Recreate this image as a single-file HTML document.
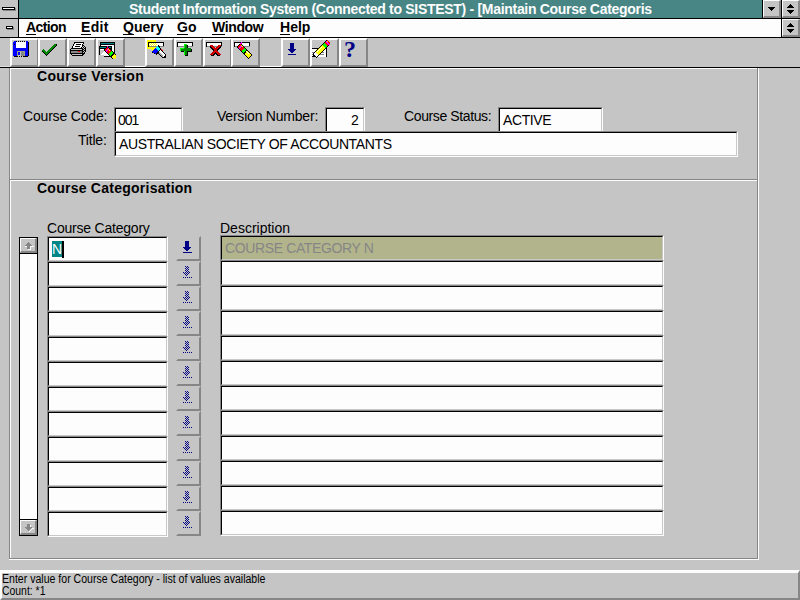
<!DOCTYPE html>
<html><head><meta charset="utf-8"><title>Student Information System</title>
<style>
*{margin:0;padding:0;box-sizing:border-box}
html,body{width:800px;height:600px;overflow:hidden;background:#c5c5c5}
body{position:relative;font-family:"Liberation Sans",sans-serif;font-size:13px;color:#000;line-height:1}
.a{position:absolute}
.t{position:absolute;white-space:nowrap;line-height:16px;height:16px}
.b{font-weight:bold}
.fld{position:absolute;background:#fdfdfd;border-top:1px solid #868686;border-left:1px solid #868686;border-right:1px solid #fdfdfd;border-bottom:1px solid #fdfdfd}
.fld i{position:absolute;left:0;top:0;right:0;bottom:0;border-top:1px solid #000;border-left:1px solid #000;border-right:1px solid #c8c8c8;border-bottom:1px solid #c8c8c8}
.tb{position:absolute;top:38px;width:29px;height:29px;background:#c5c5c5;border-left:2px solid #fdfdfd;border-top:2px solid #fdfdfd;border-right:2px solid #868686;border-bottom:2px solid #868686}
.tb svg{position:absolute;left:0;top:0}
.lov{position:absolute;left:176px;width:25px;height:25px;border:2px solid transparent;border-right-color:#868686;border-bottom-color:#868686}
svg{shape-rendering:crispEdges;display:block;overflow:visible}
u{text-decoration:none;border-bottom:1px solid #000;display:inline-block;line-height:12px;height:14px}
</style></head><body>

<div class="a" style="left:0;top:0;width:800px;height:19px;background:#000"></div>
<div class="a" style="left:0;top:0;width:18px;height:18px;background:#c5c5c5"></div>
<div class="a" style="left:3px;top:8px;width:13px;height:3px;background:#868686"></div>
<div class="a" style="left:2px;top:7px;width:13px;height:3px;background:#fdfdfd;border:1px solid #000"></div>
<div class="a" style="left:19px;top:0;width:743px;height:18px;background:#488686"></div>
<div class="t b" id="title" style="left:129px;top:1px;font-size:14px;letter-spacing:-0.299px;color:#fdfdfd;">Student Information System (Connected to SISTEST) - [Maintain Course Categoris</div>
<div class="a" style="left:763px;top:0px;width:18px;height:18px;background:#c5c5c5;border-left:1px solid #fdfdfd;border-top:1px solid #fdfdfd;border-right:2px solid #868686;border-bottom:2px solid #868686"></div><svg class="a" style="left:763px;top:0px" width="18" height="18" viewBox="0 0 18 18"><rect x="5" y="7" width="7" height="1" fill="#000"/><rect x="6" y="8" width="5" height="1" fill="#000"/><rect x="7" y="9" width="3" height="1" fill="#000"/><rect x="8" y="10" width="1" height="1" fill="#000"/></svg>
<div class="a" style="left:782px;top:0px;width:18px;height:18px;background:#c5c5c5;border-left:1px solid #fdfdfd;border-top:1px solid #fdfdfd;border-right:2px solid #868686;border-bottom:2px solid #868686"></div><svg class="a" style="left:782px;top:0px" width="18" height="18" viewBox="0 0 18 18"><rect x="8" y="4" width="1" height="1" fill="#000"/><rect x="7" y="5" width="3" height="1" fill="#000"/><rect x="6" y="6" width="5" height="1" fill="#000"/><rect x="5" y="7" width="7" height="1" fill="#000"/><rect x="5" y="10" width="7" height="1" fill="#000"/><rect x="6" y="11" width="5" height="1" fill="#000"/><rect x="7" y="12" width="3" height="1" fill="#000"/><rect x="8" y="13" width="1" height="1" fill="#000"/></svg>
<div class="a" style="left:0;top:19px;width:800px;height:19px;background:#000"></div>
<div class="a" style="left:0;top:19px;width:18px;height:18px;background:#c5c5c5"></div>
<div class="a" style="left:7px;top:27px;width:7px;height:3px;background:#868686"></div>
<div class="a" style="left:6px;top:26px;width:7px;height:3px;background:#fdfdfd;border:1px solid #000"></div>
<div class="a" style="left:19px;top:19px;width:762px;height:18px;background:#fdfdfd"></div>
<div class="a" style="left:782px;top:19px;width:18px;height:18px;background:#c5c5c5;border-left:1px solid #fdfdfd;border-top:1px solid #fdfdfd;border-right:2px solid #868686;border-bottom:2px solid #868686"></div><svg class="a" style="left:782px;top:19px" width="18" height="18" viewBox="0 0 18 18"><rect x="8" y="4" width="1" height="1" fill="#000"/><rect x="7" y="5" width="3" height="1" fill="#000"/><rect x="6" y="6" width="5" height="1" fill="#000"/><rect x="5" y="7" width="7" height="1" fill="#000"/><rect x="5" y="10" width="7" height="1" fill="#000"/><rect x="6" y="11" width="5" height="1" fill="#000"/><rect x="7" y="12" width="3" height="1" fill="#000"/><rect x="8" y="13" width="1" height="1" fill="#000"/></svg>
<div class="t b" id="mA" style="left:26px;top:19px;font-size:14px;letter-spacing:-0.600px;color:#000;"><u>A</u>ction</div>
<div class="t b" id="mE" style="left:81px;top:19px;font-size:14px;letter-spacing:0.333px;color:#000;"><u>E</u>dit</div>
<div class="t b" id="mQ" style="left:123px;top:19px;font-size:14px;letter-spacing:0.000px;color:#000;"><u>Q</u>uery</div>
<div class="t b" id="mG" style="left:177px;top:19px;font-size:14px;letter-spacing:0.000px;color:#000;"><u>G</u>o</div>
<div class="t b" id="mW" style="left:212px;top:19px;font-size:14px;letter-spacing:-0.400px;color:#000;"><u>W</u>indow</div>
<div class="t b" id="mH" style="left:280px;top:19px;font-size:14px;letter-spacing:0.000px;color:#000;"><u>H</u>elp</div>
<div class="a" style="left:0;top:38px;width:800px;height:29px;background:#c5c5c5"></div>
<div class="a" style="left:0;top:67px;width:800px;height:1px;background:#000"></div>
<div class="tb" style="left:10px"></div><svg class="a" style="left:10px;top:38px" width="29" height="29" viewBox="10 38 29 29"><rect x="14" y="41" width="2" height="1" fill="#0000ff"/><rect x="16" y="41" width="1" height="1" fill="#000"/><rect x="17" y="41" width="1" height="1" fill="#c5c5c5"/><rect x="18" y="41" width="1" height="1" fill="#000"/><rect x="19" y="41" width="1" height="1" fill="#c5c5c5"/><rect x="20" y="41" width="1" height="1" fill="#000"/><rect x="21" y="41" width="1" height="1" fill="#c5c5c5"/><rect x="22" y="41" width="1" height="1" fill="#000"/><rect x="23" y="41" width="1" height="1" fill="#c5c5c5"/><rect x="24" y="41" width="1" height="1" fill="#000"/><rect x="25" y="41" width="1" height="1" fill="#c5c5c5"/><rect x="26" y="41" width="2" height="1" fill="#0000ff"/><rect x="13" y="42" width="3" height="1" fill="#0000ff"/><rect x="16" y="42" width="10" height="1" fill="#fdfdfd"/><rect x="26" y="42" width="2" height="1" fill="#0000ff"/><rect x="28" y="42" width="1" height="1" fill="#000"/><rect x="13" y="43" width="3" height="1" fill="#0000ff"/><rect x="16" y="43" width="10" height="1" fill="#fdfdfd"/><rect x="26" y="43" width="2" height="1" fill="#0000ff"/><rect x="28" y="43" width="1" height="1" fill="#000"/><rect x="13" y="44" width="1" height="1" fill="#0000ff"/><rect x="14" y="44" width="1" height="1" fill="#000"/><rect x="15" y="44" width="1" height="1" fill="#0000ff"/><rect x="16" y="44" width="10" height="1" fill="#fdfdfd"/><rect x="26" y="44" width="2" height="1" fill="#0000ff"/><rect x="28" y="44" width="1" height="1" fill="#000"/><rect x="13" y="45" width="3" height="1" fill="#0000ff"/><rect x="16" y="45" width="10" height="1" fill="#fdfdfd"/><rect x="26" y="45" width="2" height="1" fill="#0000ff"/><rect x="28" y="45" width="1" height="1" fill="#000"/><rect x="13" y="46" width="3" height="1" fill="#0000ff"/><rect x="16" y="46" width="10" height="1" fill="#fdfdfd"/><rect x="26" y="46" width="2" height="1" fill="#0000ff"/><rect x="28" y="46" width="1" height="1" fill="#000"/><rect x="13" y="47" width="3" height="1" fill="#0000ff"/><rect x="16" y="47" width="10" height="1" fill="#fdfdfd"/><rect x="26" y="47" width="2" height="1" fill="#0000ff"/><rect x="28" y="47" width="1" height="1" fill="#000"/><rect x="13" y="48" width="15" height="1" fill="#0000ff"/><rect x="28" y="48" width="1" height="1" fill="#000"/><rect x="13" y="49" width="15" height="1" fill="#0000ff"/><rect x="28" y="49" width="1" height="1" fill="#000"/><rect x="13" y="50" width="15" height="1" fill="#0000ff"/><rect x="28" y="50" width="1" height="1" fill="#000"/><rect x="13" y="51" width="4" height="1" fill="#0000ff"/><rect x="17" y="51" width="8" height="1" fill="#a0a086"/><rect x="25" y="51" width="3" height="1" fill="#0000ff"/><rect x="28" y="51" width="1" height="1" fill="#000"/><rect x="13" y="52" width="4" height="1" fill="#0000ff"/><rect x="17" y="52" width="1" height="1" fill="#a0a086"/><rect x="18" y="52" width="2" height="1" fill="#0000ff"/><rect x="20" y="52" width="1" height="1" fill="#c5c5c5"/><rect x="21" y="52" width="3" height="1" fill="#868686"/><rect x="24" y="52" width="1" height="1" fill="#a0a086"/><rect x="25" y="52" width="3" height="1" fill="#0000ff"/><rect x="28" y="52" width="1" height="1" fill="#000"/><rect x="13" y="53" width="4" height="1" fill="#0000ff"/><rect x="17" y="53" width="1" height="1" fill="#a0a086"/><rect x="18" y="53" width="2" height="1" fill="#0000ff"/><rect x="20" y="53" width="1" height="1" fill="#c5c5c5"/><rect x="21" y="53" width="3" height="1" fill="#868686"/><rect x="24" y="53" width="1" height="1" fill="#a0a086"/><rect x="25" y="53" width="3" height="1" fill="#0000ff"/><rect x="28" y="53" width="1" height="1" fill="#000"/><rect x="13" y="54" width="4" height="1" fill="#0000ff"/><rect x="17" y="54" width="1" height="1" fill="#a0a086"/><rect x="18" y="54" width="2" height="1" fill="#0000ff"/><rect x="20" y="54" width="1" height="1" fill="#c5c5c5"/><rect x="21" y="54" width="3" height="1" fill="#868686"/><rect x="24" y="54" width="1" height="1" fill="#a0a086"/><rect x="25" y="54" width="3" height="1" fill="#0000ff"/><rect x="28" y="54" width="1" height="1" fill="#000"/><rect x="13" y="55" width="4" height="1" fill="#0000ff"/><rect x="17" y="55" width="1" height="1" fill="#a0a086"/><rect x="18" y="55" width="3" height="1" fill="#c5c5c5"/><rect x="21" y="55" width="3" height="1" fill="#868686"/><rect x="24" y="55" width="1" height="1" fill="#a0a086"/><rect x="25" y="55" width="3" height="1" fill="#0000ff"/><rect x="28" y="55" width="1" height="1" fill="#000"/><rect x="14" y="56" width="4" height="1" fill="#000"/><rect x="18" y="56" width="1" height="1" fill="#c5c5c5"/><rect x="19" y="56" width="1" height="1" fill="#000"/><rect x="20" y="56" width="1" height="1" fill="#c5c5c5"/><rect x="21" y="56" width="1" height="1" fill="#000"/><rect x="22" y="56" width="1" height="1" fill="#c5c5c5"/><rect x="23" y="56" width="5" height="1" fill="#000"/></svg>
<div class="tb" style="left:38px"></div><svg class="a" style="left:38px;top:38px" width="29" height="29" viewBox="38 38 29 29"><rect x="54" y="44" width="2" height="1" fill="#008600"/><rect x="53" y="45" width="3" height="1" fill="#008600"/><rect x="52" y="46" width="3" height="1" fill="#008600"/><rect x="51" y="47" width="3" height="1" fill="#008600"/><rect x="50" y="48" width="3" height="1" fill="#008600"/><rect x="49" y="49" width="3" height="1" fill="#008600"/><rect x="48" y="50" width="3" height="1" fill="#008600"/><rect x="47" y="51" width="3" height="1" fill="#008600"/><rect x="44" y="52" width="5" height="1" fill="#008600"/><rect x="45" y="53" width="3" height="1" fill="#008600"/><rect x="46" y="54" width="1" height="1" fill="#008600"/><rect x="43" y="49" width="1" height="1" fill="#008600"/><rect x="42" y="50" width="3" height="1" fill="#008600"/><rect x="43" y="51" width="3" height="1" fill="#008600"/><rect x="56" y="44" width="1" height="1" fill="#000"/><rect x="56" y="45" width="1" height="1" fill="#000"/><rect x="55" y="46" width="1" height="1" fill="#000"/><rect x="54" y="47" width="1" height="1" fill="#000"/><rect x="53" y="48" width="1" height="1" fill="#000"/><rect x="52" y="49" width="1" height="1" fill="#000"/><rect x="51" y="50" width="1" height="1" fill="#000"/><rect x="50" y="51" width="1" height="1" fill="#000"/><rect x="49" y="52" width="1" height="1" fill="#000"/><rect x="48" y="53" width="1" height="1" fill="#000"/><rect x="47" y="54" width="1" height="1" fill="#000"/><rect x="46" y="55" width="1" height="1" fill="#000"/><rect x="42" y="51" width="1" height="1" fill="#000"/><rect x="43" y="52" width="1" height="1" fill="#000"/><rect x="44" y="53" width="1" height="1" fill="#000"/><rect x="45" y="54" width="1" height="1" fill="#000"/></svg>
<div class="tb" style="left:67px"></div><svg class="a" style="left:67px;top:38px" width="29" height="29" viewBox="67 38 29 29"><rect x="74" y="42" width="10" height="1" fill="#000"/><rect x="74" y="43" width="1" height="1" fill="#000"/><rect x="75" y="43" width="8" height="1" fill="#fdfdfd"/><rect x="83" y="43" width="1" height="1" fill="#000"/><rect x="73" y="44" width="1" height="1" fill="#000"/><rect x="74" y="44" width="2" height="1" fill="#fdfdfd"/><rect x="76" y="44" width="5" height="1" fill="#000"/><rect x="81" y="44" width="1" height="1" fill="#fdfdfd"/><rect x="82" y="44" width="1" height="1" fill="#000"/><rect x="73" y="45" width="1" height="1" fill="#000"/><rect x="74" y="45" width="8" height="1" fill="#fdfdfd"/><rect x="82" y="45" width="2" height="1" fill="#000"/><rect x="72" y="46" width="1" height="1" fill="#000"/><rect x="73" y="46" width="2" height="1" fill="#fdfdfd"/><rect x="75" y="46" width="5" height="1" fill="#000"/><rect x="80" y="46" width="2" height="1" fill="#fdfdfd"/><rect x="82" y="46" width="1" height="1" fill="#000"/><rect x="83" y="46" width="1" height="1" fill="#c5c5c5"/><rect x="84" y="46" width="1" height="1" fill="#000"/><rect x="72" y="47" width="1" height="1" fill="#000"/><rect x="73" y="47" width="8" height="1" fill="#fdfdfd"/><rect x="81" y="47" width="1" height="1" fill="#000"/><rect x="82" y="47" width="1" height="1" fill="#c5c5c5"/><rect x="83" y="47" width="1" height="1" fill="#000"/><rect x="84" y="47" width="1" height="1" fill="#c5c5c5"/><rect x="85" y="47" width="1" height="1" fill="#000"/><rect x="71" y="48" width="12" height="1" fill="#000"/><rect x="83" y="48" width="1" height="1" fill="#c5c5c5"/><rect x="84" y="48" width="2" height="1" fill="#000"/><rect x="70" y="49" width="1" height="1" fill="#000"/><rect x="71" y="49" width="11" height="1" fill="#c5c5c5"/><rect x="82" y="49" width="2" height="1" fill="#000"/><rect x="84" y="49" width="1" height="1" fill="#c5c5c5"/><rect x="85" y="49" width="1" height="1" fill="#000"/><rect x="70" y="50" width="13" height="1" fill="#000"/><rect x="83" y="50" width="1" height="1" fill="#c5c5c5"/><rect x="84" y="50" width="2" height="1" fill="#000"/><rect x="70" y="51" width="1" height="1" fill="#000"/><rect x="71" y="51" width="7" height="1" fill="#868686"/><rect x="78" y="51" width="2" height="1" fill="#ff0000"/><rect x="80" y="51" width="2" height="1" fill="#868686"/><rect x="82" y="51" width="2" height="1" fill="#000"/><rect x="84" y="51" width="1" height="1" fill="#c5c5c5"/><rect x="85" y="51" width="1" height="1" fill="#000"/><rect x="70" y="52" width="1" height="1" fill="#000"/><rect x="71" y="52" width="11" height="1" fill="#868686"/><rect x="82" y="52" width="1" height="1" fill="#000"/><rect x="83" y="52" width="1" height="1" fill="#c5c5c5"/><rect x="84" y="52" width="1" height="1" fill="#000"/><rect x="70" y="53" width="15" height="1" fill="#000"/><rect x="71" y="54" width="1" height="1" fill="#000"/><rect x="72" y="54" width="10" height="1" fill="#c5c5c5"/><rect x="82" y="54" width="2" height="1" fill="#000"/><rect x="72" y="55" width="11" height="1" fill="#000"/></svg>
<div class="tb" style="left:96px"></div><svg class="a" style="left:96px;top:38px" width="29" height="29" viewBox="96 38 29 29"><rect x="100" y="42" width="15" height="11" fill="#000"/><rect x="101" y="43" width="13" height="1" fill="#008686"/><rect x="101" y="45" width="13" height="8" fill="#fdfdfd"/><rect x="99" y="46" width="13" height="11" fill="#000"/><rect x="100" y="47" width="11" height="1" fill="#008686"/><rect x="100" y="49" width="11" height="7" fill="#fdfdfd"/><polygon points="100,50 105,50 100,56" fill="#c5c5c5"/><rect x="99" y="55" width="5" height="3" fill="#c5c5c5"/><rect x="104" y="49" width="1" height="1" fill="#000"/><rect x="104" y="50" width="1" height="1" fill="#000"/><rect x="105" y="48" width="1" height="1" fill="#000"/><rect x="105" y="49" width="1" height="1" fill="#000"/><rect x="106" y="47" width="1" height="1" fill="#000"/><rect x="106" y="48" width="1" height="1" fill="#000"/><rect x="107" y="46" width="1" height="1" fill="#000"/><rect x="107" y="47" width="1" height="1" fill="#000"/><rect x="105" y="50" width="1" height="1" fill="#000"/><rect x="105" y="51" width="1" height="1" fill="#000"/><rect x="106" y="49" width="1" height="1" fill="#000"/><rect x="106" y="50" width="1" height="1" fill="#000"/><rect x="107" y="48" width="1" height="1" fill="#000"/><rect x="107" y="49" width="1" height="1" fill="#000"/><rect x="108" y="47" width="1" height="1" fill="#000"/><rect x="108" y="48" width="1" height="1" fill="#000"/><rect x="106" y="51" width="1" height="1" fill="#000"/><rect x="106" y="52" width="1" height="1" fill="#000"/><rect x="107" y="50" width="1" height="1" fill="#000"/><rect x="107" y="51" width="1" height="1" fill="#000"/><rect x="108" y="49" width="1" height="1" fill="#000"/><rect x="108" y="50" width="1" height="1" fill="#000"/><rect x="109" y="48" width="1" height="1" fill="#000"/><rect x="109" y="49" width="1" height="1" fill="#000"/><rect x="107" y="52" width="1" height="1" fill="#000"/><rect x="107" y="53" width="1" height="1" fill="#000"/><rect x="108" y="51" width="1" height="1" fill="#000"/><rect x="108" y="52" width="1" height="1" fill="#000"/><rect x="109" y="50" width="1" height="1" fill="#000"/><rect x="109" y="51" width="1" height="1" fill="#000"/><rect x="110" y="49" width="1" height="1" fill="#000"/><rect x="110" y="50" width="1" height="1" fill="#000"/><rect x="108" y="53" width="1" height="1" fill="#000"/><rect x="108" y="54" width="1" height="1" fill="#000"/><rect x="109" y="52" width="1" height="1" fill="#000"/><rect x="109" y="53" width="1" height="1" fill="#000"/><rect x="110" y="51" width="1" height="1" fill="#000"/><rect x="110" y="52" width="1" height="1" fill="#000"/><rect x="111" y="50" width="1" height="1" fill="#000"/><rect x="111" y="51" width="1" height="1" fill="#000"/><rect x="109" y="54" width="1" height="1" fill="#000"/><rect x="109" y="55" width="1" height="1" fill="#000"/><rect x="110" y="53" width="1" height="1" fill="#000"/><rect x="110" y="54" width="1" height="1" fill="#000"/><rect x="111" y="52" width="1" height="1" fill="#000"/><rect x="111" y="53" width="1" height="1" fill="#000"/><rect x="112" y="51" width="1" height="1" fill="#000"/><rect x="112" y="52" width="1" height="1" fill="#000"/><rect x="110" y="55" width="1" height="1" fill="#000"/><rect x="110" y="56" width="1" height="1" fill="#000"/><rect x="111" y="54" width="1" height="1" fill="#000"/><rect x="111" y="55" width="1" height="1" fill="#000"/><rect x="112" y="53" width="1" height="1" fill="#000"/><rect x="112" y="54" width="1" height="1" fill="#000"/><rect x="113" y="52" width="1" height="1" fill="#000"/><rect x="113" y="53" width="1" height="1" fill="#000"/><rect x="111" y="56" width="1" height="1" fill="#000"/><rect x="111" y="57" width="1" height="1" fill="#000"/><rect x="112" y="55" width="1" height="1" fill="#000"/><rect x="112" y="56" width="1" height="1" fill="#000"/><rect x="113" y="54" width="1" height="1" fill="#000"/><rect x="113" y="55" width="1" height="1" fill="#000"/><rect x="114" y="53" width="1" height="1" fill="#000"/><rect x="114" y="54" width="1" height="1" fill="#000"/><rect x="112" y="57" width="1" height="1" fill="#000"/><rect x="112" y="58" width="1" height="1" fill="#000"/><rect x="113" y="56" width="1" height="1" fill="#000"/><rect x="113" y="57" width="1" height="1" fill="#000"/><rect x="114" y="55" width="1" height="1" fill="#000"/><rect x="114" y="56" width="1" height="1" fill="#000"/><rect x="115" y="54" width="1" height="1" fill="#000"/><rect x="115" y="55" width="1" height="1" fill="#000"/><rect x="105" y="49" width="1" height="1" fill="#ff0000"/><rect x="105" y="50" width="1" height="1" fill="#ff0000"/><rect x="106" y="48" width="1" height="1" fill="#ff0000"/><rect x="106" y="49" width="1" height="1" fill="#ff0000"/><rect x="107" y="47" width="1" height="1" fill="#ff0000"/><rect x="107" y="48" width="1" height="1" fill="#ff0000"/><rect x="106" y="50" width="1" height="1" fill="#ff00ff"/><rect x="106" y="51" width="1" height="1" fill="#ff00ff"/><rect x="107" y="49" width="1" height="1" fill="#ff00ff"/><rect x="107" y="50" width="1" height="1" fill="#ff00ff"/><rect x="108" y="48" width="1" height="1" fill="#ff00ff"/><rect x="108" y="49" width="1" height="1" fill="#ff00ff"/><rect x="107" y="51" width="1" height="1" fill="#ff0000"/><rect x="107" y="52" width="1" height="1" fill="#ff0000"/><rect x="108" y="50" width="1" height="1" fill="#ff0000"/><rect x="108" y="51" width="1" height="1" fill="#ff0000"/><rect x="109" y="49" width="1" height="1" fill="#ff0000"/><rect x="109" y="50" width="1" height="1" fill="#ff0000"/><rect x="108" y="52" width="1" height="1" fill="#ff0000"/><rect x="108" y="53" width="1" height="1" fill="#ff0000"/><rect x="109" y="51" width="1" height="1" fill="#ff0000"/><rect x="109" y="52" width="1" height="1" fill="#ff0000"/><rect x="110" y="50" width="1" height="1" fill="#ff0000"/><rect x="110" y="51" width="1" height="1" fill="#ff0000"/><rect x="109" y="53" width="1" height="1" fill="#00ff00"/><rect x="109" y="54" width="1" height="1" fill="#00ff00"/><rect x="110" y="52" width="1" height="1" fill="#00ff00"/><rect x="110" y="53" width="1" height="1" fill="#00ff00"/><rect x="111" y="51" width="1" height="1" fill="#00ff00"/><rect x="111" y="52" width="1" height="1" fill="#00ff00"/><rect x="110" y="54" width="1" height="1" fill="#00ff00"/><rect x="110" y="55" width="1" height="1" fill="#00ff00"/><rect x="111" y="53" width="1" height="1" fill="#00ff00"/><rect x="111" y="54" width="1" height="1" fill="#00ff00"/><rect x="112" y="52" width="1" height="1" fill="#00ff00"/><rect x="112" y="53" width="1" height="1" fill="#00ff00"/><rect x="111" y="55" width="1" height="1" fill="#000"/><rect x="111" y="56" width="1" height="1" fill="#000"/><rect x="112" y="54" width="1" height="1" fill="#000"/><rect x="112" y="55" width="1" height="1" fill="#000"/><rect x="113" y="53" width="1" height="1" fill="#000"/><rect x="113" y="54" width="1" height="1" fill="#000"/><rect x="112" y="56" width="1" height="1" fill="#ffff00"/><rect x="112" y="57" width="1" height="1" fill="#ffff00"/><rect x="113" y="55" width="1" height="1" fill="#ffff00"/><rect x="113" y="56" width="1" height="1" fill="#ffff00"/><rect x="114" y="54" width="1" height="1" fill="#ffff00"/><rect x="114" y="55" width="1" height="1" fill="#ffff00"/><rect x="113" y="57" width="1" height="1" fill="#ffff00"/><rect x="113" y="58" width="1" height="1" fill="#ffff00"/><rect x="114" y="56" width="1" height="1" fill="#ffff00"/><rect x="114" y="57" width="1" height="1" fill="#ffff00"/><rect x="115" y="55" width="1" height="1" fill="#ffff00"/><rect x="115" y="56" width="1" height="1" fill="#ffff00"/><rect x="114" y="57" width="2" height="1" fill="#ffff00"/><rect x="115" y="58" width="1" height="1" fill="#ffff00"/><rect x="107" y="46" width="1" height="1" fill="#ff00ff"/><rect x="108" y="49" width="1" height="1" fill="#ffff00"/><rect x="109" y="50" width="1" height="1" fill="#ffff00"/></svg>
<div class="tb" style="left:145px"></div><svg class="a" style="left:145px;top:38px" width="29" height="29" viewBox="145 38 29 29"><polygon points="147,40 156,40 156,47 152,51 151,49 147,49" fill="#ffff00"/><rect x="148" y="42" width="16" height="5" fill="#000"/><rect x="149" y="43" width="14" height="3" fill="#fdfdfd"/><rect x="149" y="46" width="15" height="1" fill="#868686"/><rect x="149" y="43" width="1" height="1" fill="#ffff00"/><rect x="151" y="43" width="1" height="1" fill="#ffff00"/><rect x="153" y="43" width="1" height="1" fill="#ffff00"/><rect x="155" y="43" width="1" height="1" fill="#ffff00"/><rect x="150" y="44" width="1" height="1" fill="#ffff00"/><rect x="152" y="44" width="1" height="1" fill="#ffff00"/><rect x="154" y="44" width="1" height="1" fill="#ffff00"/><rect x="156" y="44" width="1" height="1" fill="#ffff00"/><rect x="149" y="45" width="1" height="1" fill="#ffff00"/><rect x="151" y="45" width="1" height="1" fill="#ffff00"/><rect x="153" y="45" width="1" height="1" fill="#ffff00"/><rect x="155" y="45" width="1" height="1" fill="#ffff00"/><polygon points="158,45 160,46 161,50 157,55 151,52" fill="#000"/><polygon points="158,46 160,49 158,51 155,48" fill="#00ffff"/><polygon points="155,48 158,51 156,54 152,52" fill="#0000ff"/><polygon points="157,52 160,49 166,55 166,58 162,58" fill="#000"/><polygon points="158,52 160,50 165,55 163,57" fill="#fdfdfd"/><polygon points="158,53 159,52 163,56 162,57" fill="#a8a8a8"/><rect x="161" y="49" width="1" height="1" fill="#ff0000"/><rect x="162" y="50" width="1" height="1" fill="#ff0000"/></svg>
<div class="tb" style="left:174px"></div><svg class="a" style="left:174px;top:38px" width="29" height="29" viewBox="174 38 29 29"><rect x="177" y="42" width="16" height="5" fill="#000"/><rect x="178" y="43" width="14" height="3" fill="#fdfdfd"/><rect x="178" y="46" width="15" height="1" fill="#868686"/><rect x="185" y="45" width="3" height="11" fill="#000"/><rect x="181" y="49" width="11" height="3" fill="#000"/><rect x="184" y="44" width="3" height="11" fill="#008600"/><rect x="180" y="48" width="11" height="3" fill="#008600"/><rect x="184" y="44" width="1" height="4" fill="#00ff00"/><rect x="184" y="44" width="3" height="1" fill="#00ff00"/><rect x="180" y="48" width="4" height="1" fill="#00ff00"/><rect x="180" y="48" width="1" height="3" fill="#00ff00"/><rect x="184" y="51" width="1" height="4" fill="#00ff00"/></svg>
<div class="tb" style="left:203px"></div><svg class="a" style="left:203px;top:38px" width="29" height="29" viewBox="203 38 29 29"><rect x="206" y="42" width="16" height="5" fill="#000"/><rect x="207" y="43" width="14" height="3" fill="#fdfdfd"/><rect x="207" y="46" width="15" height="1" fill="#868686"/><rect x="210" y="46" width="3" height="1" fill="#000"/><rect x="218" y="46" width="3" height="1" fill="#000"/><rect x="210" y="47" width="3" height="1" fill="#000"/><rect x="218" y="47" width="3" height="1" fill="#000"/><rect x="211" y="47" width="3" height="1" fill="#000"/><rect x="217" y="47" width="3" height="1" fill="#000"/><rect x="211" y="48" width="3" height="1" fill="#000"/><rect x="217" y="48" width="3" height="1" fill="#000"/><rect x="212" y="48" width="3" height="1" fill="#000"/><rect x="216" y="48" width="3" height="1" fill="#000"/><rect x="212" y="49" width="3" height="1" fill="#000"/><rect x="216" y="49" width="3" height="1" fill="#000"/><rect x="213" y="49" width="3" height="1" fill="#000"/><rect x="215" y="49" width="3" height="1" fill="#000"/><rect x="213" y="50" width="3" height="1" fill="#000"/><rect x="215" y="50" width="3" height="1" fill="#000"/><rect x="214" y="50" width="3" height="1" fill="#000"/><rect x="214" y="50" width="3" height="1" fill="#000"/><rect x="214" y="51" width="3" height="1" fill="#000"/><rect x="214" y="51" width="3" height="1" fill="#000"/><rect x="214" y="51" width="3" height="1" fill="#000"/><rect x="214" y="51" width="3" height="1" fill="#000"/><rect x="214" y="52" width="3" height="1" fill="#000"/><rect x="214" y="52" width="3" height="1" fill="#000"/><rect x="215" y="52" width="3" height="1" fill="#000"/><rect x="213" y="52" width="3" height="1" fill="#000"/><rect x="215" y="53" width="3" height="1" fill="#000"/><rect x="213" y="53" width="3" height="1" fill="#000"/><rect x="216" y="53" width="3" height="1" fill="#000"/><rect x="212" y="53" width="3" height="1" fill="#000"/><rect x="216" y="54" width="3" height="1" fill="#000"/><rect x="212" y="54" width="3" height="1" fill="#000"/><rect x="217" y="54" width="3" height="1" fill="#000"/><rect x="211" y="54" width="3" height="1" fill="#000"/><rect x="217" y="55" width="3" height="1" fill="#000"/><rect x="211" y="55" width="3" height="1" fill="#000"/><rect x="210" y="45" width="3" height="1" fill="#ff0000"/><rect x="218" y="45" width="3" height="1" fill="#ff0000"/><rect x="211" y="46" width="3" height="1" fill="#ff0000"/><rect x="217" y="46" width="3" height="1" fill="#ff0000"/><rect x="212" y="47" width="3" height="1" fill="#ff0000"/><rect x="216" y="47" width="3" height="1" fill="#ff0000"/><rect x="213" y="48" width="3" height="1" fill="#ff0000"/><rect x="215" y="48" width="3" height="1" fill="#ff0000"/><rect x="214" y="49" width="3" height="1" fill="#ff0000"/><rect x="214" y="49" width="3" height="1" fill="#ff0000"/><rect x="214" y="50" width="3" height="1" fill="#ff0000"/><rect x="214" y="50" width="3" height="1" fill="#ff0000"/><rect x="215" y="51" width="3" height="1" fill="#ff0000"/><rect x="213" y="51" width="3" height="1" fill="#ff0000"/><rect x="216" y="52" width="3" height="1" fill="#ff0000"/><rect x="212" y="52" width="3" height="1" fill="#ff0000"/><rect x="217" y="53" width="3" height="1" fill="#ff0000"/><rect x="211" y="53" width="3" height="1" fill="#ff0000"/><rect x="218" y="54" width="3" height="1" fill="#ff0000"/><rect x="210" y="54" width="3" height="1" fill="#ff0000"/><rect x="211" y="45" width="2" height="1" fill="#c80000"/><rect x="218" y="45" width="2" height="1" fill="#c80000"/><rect x="212" y="46" width="2" height="1" fill="#c80000"/><rect x="217" y="46" width="2" height="1" fill="#c80000"/><rect x="213" y="47" width="2" height="1" fill="#c80000"/><rect x="216" y="47" width="2" height="1" fill="#c80000"/><rect x="214" y="48" width="2" height="1" fill="#c80000"/><rect x="215" y="48" width="2" height="1" fill="#c80000"/><rect x="215" y="49" width="2" height="1" fill="#c80000"/><rect x="214" y="49" width="2" height="1" fill="#c80000"/><rect x="215" y="50" width="2" height="1" fill="#c80000"/><rect x="214" y="50" width="2" height="1" fill="#c80000"/><rect x="216" y="51" width="2" height="1" fill="#c80000"/><rect x="213" y="51" width="2" height="1" fill="#c80000"/><rect x="217" y="52" width="2" height="1" fill="#c80000"/><rect x="212" y="52" width="2" height="1" fill="#c80000"/><rect x="218" y="53" width="2" height="1" fill="#c80000"/><rect x="211" y="53" width="2" height="1" fill="#c80000"/><rect x="219" y="54" width="2" height="1" fill="#c80000"/><rect x="210" y="54" width="2" height="1" fill="#c80000"/></svg>
<div class="tb" style="left:231px"></div><svg class="a" style="left:231px;top:38px" width="29" height="29" viewBox="231 38 29 29"><rect x="234" y="42" width="16" height="5" fill="#000"/><rect x="235" y="43" width="14" height="3" fill="#fdfdfd"/><rect x="235" y="46" width="15" height="1" fill="#868686"/><rect x="237" y="46" width="1" height="1" fill="#000"/><rect x="237" y="47" width="1" height="1" fill="#000"/><rect x="238" y="45" width="1" height="1" fill="#000"/><rect x="238" y="46" width="1" height="1" fill="#000"/><rect x="239" y="44" width="1" height="1" fill="#000"/><rect x="239" y="45" width="1" height="1" fill="#000"/><rect x="240" y="43" width="1" height="1" fill="#000"/><rect x="240" y="44" width="1" height="1" fill="#000"/><rect x="238" y="47" width="1" height="1" fill="#000"/><rect x="238" y="48" width="1" height="1" fill="#000"/><rect x="239" y="46" width="1" height="1" fill="#000"/><rect x="239" y="47" width="1" height="1" fill="#000"/><rect x="240" y="45" width="1" height="1" fill="#000"/><rect x="240" y="46" width="1" height="1" fill="#000"/><rect x="241" y="44" width="1" height="1" fill="#000"/><rect x="241" y="45" width="1" height="1" fill="#000"/><rect x="239" y="48" width="1" height="1" fill="#000"/><rect x="239" y="49" width="1" height="1" fill="#000"/><rect x="240" y="47" width="1" height="1" fill="#000"/><rect x="240" y="48" width="1" height="1" fill="#000"/><rect x="241" y="46" width="1" height="1" fill="#000"/><rect x="241" y="47" width="1" height="1" fill="#000"/><rect x="242" y="45" width="1" height="1" fill="#000"/><rect x="242" y="46" width="1" height="1" fill="#000"/><rect x="240" y="49" width="1" height="1" fill="#000"/><rect x="240" y="50" width="1" height="1" fill="#000"/><rect x="241" y="48" width="1" height="1" fill="#000"/><rect x="241" y="49" width="1" height="1" fill="#000"/><rect x="242" y="47" width="1" height="1" fill="#000"/><rect x="242" y="48" width="1" height="1" fill="#000"/><rect x="243" y="46" width="1" height="1" fill="#000"/><rect x="243" y="47" width="1" height="1" fill="#000"/><rect x="241" y="50" width="1" height="1" fill="#000"/><rect x="241" y="51" width="1" height="1" fill="#000"/><rect x="242" y="49" width="1" height="1" fill="#000"/><rect x="242" y="50" width="1" height="1" fill="#000"/><rect x="243" y="48" width="1" height="1" fill="#000"/><rect x="243" y="49" width="1" height="1" fill="#000"/><rect x="244" y="47" width="1" height="1" fill="#000"/><rect x="244" y="48" width="1" height="1" fill="#000"/><rect x="242" y="51" width="1" height="1" fill="#000"/><rect x="242" y="52" width="1" height="1" fill="#000"/><rect x="243" y="50" width="1" height="1" fill="#000"/><rect x="243" y="51" width="1" height="1" fill="#000"/><rect x="244" y="49" width="1" height="1" fill="#000"/><rect x="244" y="50" width="1" height="1" fill="#000"/><rect x="245" y="48" width="1" height="1" fill="#000"/><rect x="245" y="49" width="1" height="1" fill="#000"/><rect x="243" y="52" width="1" height="1" fill="#000"/><rect x="243" y="53" width="1" height="1" fill="#000"/><rect x="244" y="51" width="1" height="1" fill="#000"/><rect x="244" y="52" width="1" height="1" fill="#000"/><rect x="245" y="50" width="1" height="1" fill="#000"/><rect x="245" y="51" width="1" height="1" fill="#000"/><rect x="246" y="49" width="1" height="1" fill="#000"/><rect x="246" y="50" width="1" height="1" fill="#000"/><rect x="244" y="53" width="1" height="1" fill="#000"/><rect x="244" y="54" width="1" height="1" fill="#000"/><rect x="245" y="52" width="1" height="1" fill="#000"/><rect x="245" y="53" width="1" height="1" fill="#000"/><rect x="246" y="51" width="1" height="1" fill="#000"/><rect x="246" y="52" width="1" height="1" fill="#000"/><rect x="247" y="50" width="1" height="1" fill="#000"/><rect x="247" y="51" width="1" height="1" fill="#000"/><rect x="245" y="54" width="1" height="1" fill="#000"/><rect x="245" y="55" width="1" height="1" fill="#000"/><rect x="246" y="53" width="1" height="1" fill="#000"/><rect x="246" y="54" width="1" height="1" fill="#000"/><rect x="247" y="52" width="1" height="1" fill="#000"/><rect x="247" y="53" width="1" height="1" fill="#000"/><rect x="248" y="51" width="1" height="1" fill="#000"/><rect x="248" y="52" width="1" height="1" fill="#000"/><rect x="246" y="55" width="1" height="1" fill="#000"/><rect x="246" y="56" width="1" height="1" fill="#000"/><rect x="247" y="54" width="1" height="1" fill="#000"/><rect x="247" y="55" width="1" height="1" fill="#000"/><rect x="248" y="53" width="1" height="1" fill="#000"/><rect x="248" y="54" width="1" height="1" fill="#000"/><rect x="249" y="52" width="1" height="1" fill="#000"/><rect x="249" y="53" width="1" height="1" fill="#000"/><rect x="247" y="56" width="1" height="1" fill="#000"/><rect x="247" y="57" width="1" height="1" fill="#000"/><rect x="248" y="55" width="1" height="1" fill="#000"/><rect x="248" y="56" width="1" height="1" fill="#000"/><rect x="249" y="54" width="1" height="1" fill="#000"/><rect x="249" y="55" width="1" height="1" fill="#000"/><rect x="250" y="53" width="1" height="1" fill="#000"/><rect x="250" y="54" width="1" height="1" fill="#000"/><rect x="248" y="57" width="1" height="1" fill="#000"/><rect x="248" y="58" width="1" height="1" fill="#000"/><rect x="249" y="56" width="1" height="1" fill="#000"/><rect x="249" y="57" width="1" height="1" fill="#000"/><rect x="250" y="55" width="1" height="1" fill="#000"/><rect x="250" y="56" width="1" height="1" fill="#000"/><rect x="251" y="54" width="1" height="1" fill="#000"/><rect x="251" y="55" width="1" height="1" fill="#000"/><rect x="238" y="46" width="1" height="1" fill="#ff0000"/><rect x="238" y="47" width="1" height="1" fill="#ff0000"/><rect x="239" y="45" width="1" height="1" fill="#ff0000"/><rect x="239" y="46" width="1" height="1" fill="#ff0000"/><rect x="240" y="44" width="1" height="1" fill="#ff0000"/><rect x="240" y="45" width="1" height="1" fill="#ff0000"/><rect x="239" y="47" width="1" height="1" fill="#ff00ff"/><rect x="239" y="48" width="1" height="1" fill="#ff00ff"/><rect x="240" y="46" width="1" height="1" fill="#ff00ff"/><rect x="240" y="47" width="1" height="1" fill="#ff00ff"/><rect x="241" y="45" width="1" height="1" fill="#ff00ff"/><rect x="241" y="46" width="1" height="1" fill="#ff00ff"/><rect x="240" y="48" width="1" height="1" fill="#ff0000"/><rect x="240" y="49" width="1" height="1" fill="#ff0000"/><rect x="241" y="47" width="1" height="1" fill="#ff0000"/><rect x="241" y="48" width="1" height="1" fill="#ff0000"/><rect x="242" y="46" width="1" height="1" fill="#ff0000"/><rect x="242" y="47" width="1" height="1" fill="#ff0000"/><rect x="241" y="49" width="1" height="1" fill="#ff0000"/><rect x="241" y="50" width="1" height="1" fill="#ff0000"/><rect x="242" y="48" width="1" height="1" fill="#ff0000"/><rect x="242" y="49" width="1" height="1" fill="#ff0000"/><rect x="243" y="47" width="1" height="1" fill="#ff0000"/><rect x="243" y="48" width="1" height="1" fill="#ff0000"/><rect x="242" y="50" width="1" height="1" fill="#00ff00"/><rect x="242" y="51" width="1" height="1" fill="#00ff00"/><rect x="243" y="49" width="1" height="1" fill="#00ff00"/><rect x="243" y="50" width="1" height="1" fill="#00ff00"/><rect x="244" y="48" width="1" height="1" fill="#00ff00"/><rect x="244" y="49" width="1" height="1" fill="#00ff00"/><rect x="243" y="51" width="1" height="1" fill="#00ff00"/><rect x="243" y="52" width="1" height="1" fill="#00ff00"/><rect x="244" y="50" width="1" height="1" fill="#00ff00"/><rect x="244" y="51" width="1" height="1" fill="#00ff00"/><rect x="245" y="49" width="1" height="1" fill="#00ff00"/><rect x="245" y="50" width="1" height="1" fill="#00ff00"/><rect x="244" y="52" width="1" height="1" fill="#000"/><rect x="244" y="53" width="1" height="1" fill="#000"/><rect x="245" y="51" width="1" height="1" fill="#000"/><rect x="245" y="52" width="1" height="1" fill="#000"/><rect x="246" y="50" width="1" height="1" fill="#000"/><rect x="246" y="51" width="1" height="1" fill="#000"/><rect x="245" y="53" width="1" height="1" fill="#ffff00"/><rect x="245" y="54" width="1" height="1" fill="#ffff00"/><rect x="246" y="52" width="1" height="1" fill="#ffff00"/><rect x="246" y="53" width="1" height="1" fill="#ffff00"/><rect x="247" y="51" width="1" height="1" fill="#ffff00"/><rect x="247" y="52" width="1" height="1" fill="#ffff00"/><rect x="246" y="54" width="1" height="1" fill="#ffff00"/><rect x="246" y="55" width="1" height="1" fill="#ffff00"/><rect x="247" y="53" width="1" height="1" fill="#ffff00"/><rect x="247" y="54" width="1" height="1" fill="#ffff00"/><rect x="248" y="52" width="1" height="1" fill="#ffff00"/><rect x="248" y="53" width="1" height="1" fill="#ffff00"/><rect x="247" y="55" width="1" height="1" fill="#ffff00"/><rect x="247" y="56" width="1" height="1" fill="#ffff00"/><rect x="248" y="54" width="1" height="1" fill="#ffff00"/><rect x="248" y="55" width="1" height="1" fill="#ffff00"/><rect x="249" y="53" width="1" height="1" fill="#ffff00"/><rect x="249" y="54" width="1" height="1" fill="#ffff00"/><rect x="248" y="56" width="1" height="1" fill="#ffff00"/><rect x="248" y="57" width="1" height="1" fill="#ffff00"/><rect x="249" y="55" width="1" height="1" fill="#ffff00"/><rect x="249" y="56" width="1" height="1" fill="#ffff00"/><rect x="250" y="54" width="1" height="1" fill="#ffff00"/><rect x="250" y="55" width="1" height="1" fill="#ffff00"/><rect x="241" y="42" width="1" height="1" fill="#ff00ff"/><rect x="240" y="43" width="2" height="1" fill="#ff00ff"/><rect x="241" y="45" width="1" height="1" fill="#ffff00"/><rect x="242" y="46" width="1" height="1" fill="#ffff00"/><rect x="246" y="51" width="1" height="1" fill="#fdfdfd"/><rect x="247" y="52" width="1" height="1" fill="#fdfdfd"/><rect x="248" y="53" width="1" height="1" fill="#fdfdfd"/></svg>
<div class="tb" style="left:281px"></div><svg class="a" style="left:281px;top:38px" width="29" height="29" viewBox="281 38 29 29"><rect x="290" y="43" width="4" height="6" fill="#000086"/><rect x="288" y="49" width="8" height="1" fill="#000086"/><rect x="289" y="50" width="6" height="1" fill="#000086"/><rect x="290" y="51" width="4" height="1" fill="#000086"/><rect x="291" y="52" width="2" height="1" fill="#000086"/><rect x="288" y="54" width="8" height="1" fill="#000086"/></svg>
<div class="tb" style="left:310px"></div><svg class="a" style="left:310px;top:38px" width="29" height="29" viewBox="310 38 29 29"><rect x="312" y="48" width="14" height="9" fill="#fdfdfd"/><rect x="312" y="48" width="9" height="1" fill="#000"/><rect x="326" y="46" width="1" height="11" fill="#000"/><rect x="312" y="52" width="12" height="1" fill="#868686"/><rect x="312" y="54" width="12" height="1" fill="#868686"/><rect x="326" y="41" width="1" height="1" fill="#000"/><rect x="326" y="40" width="1" height="1" fill="#000"/><rect x="327" y="42" width="1" height="1" fill="#000"/><rect x="327" y="41" width="1" height="1" fill="#000"/><rect x="328" y="43" width="1" height="1" fill="#000"/><rect x="328" y="42" width="1" height="1" fill="#000"/><rect x="329" y="44" width="1" height="1" fill="#000"/><rect x="329" y="43" width="1" height="1" fill="#000"/><rect x="325" y="42" width="1" height="1" fill="#000"/><rect x="325" y="41" width="1" height="1" fill="#000"/><rect x="326" y="43" width="1" height="1" fill="#000"/><rect x="326" y="42" width="1" height="1" fill="#000"/><rect x="327" y="44" width="1" height="1" fill="#000"/><rect x="327" y="43" width="1" height="1" fill="#000"/><rect x="328" y="45" width="1" height="1" fill="#000"/><rect x="328" y="44" width="1" height="1" fill="#000"/><rect x="324" y="43" width="1" height="1" fill="#000"/><rect x="324" y="42" width="1" height="1" fill="#000"/><rect x="325" y="44" width="1" height="1" fill="#000"/><rect x="325" y="43" width="1" height="1" fill="#000"/><rect x="326" y="45" width="1" height="1" fill="#000"/><rect x="326" y="44" width="1" height="1" fill="#000"/><rect x="327" y="46" width="1" height="1" fill="#000"/><rect x="327" y="45" width="1" height="1" fill="#000"/><rect x="323" y="44" width="1" height="1" fill="#000"/><rect x="323" y="43" width="1" height="1" fill="#000"/><rect x="324" y="45" width="1" height="1" fill="#000"/><rect x="324" y="44" width="1" height="1" fill="#000"/><rect x="325" y="46" width="1" height="1" fill="#000"/><rect x="325" y="45" width="1" height="1" fill="#000"/><rect x="326" y="47" width="1" height="1" fill="#000"/><rect x="326" y="46" width="1" height="1" fill="#000"/><rect x="322" y="45" width="1" height="1" fill="#000"/><rect x="322" y="44" width="1" height="1" fill="#000"/><rect x="323" y="46" width="1" height="1" fill="#000"/><rect x="323" y="45" width="1" height="1" fill="#000"/><rect x="324" y="47" width="1" height="1" fill="#000"/><rect x="324" y="46" width="1" height="1" fill="#000"/><rect x="325" y="48" width="1" height="1" fill="#000"/><rect x="325" y="47" width="1" height="1" fill="#000"/><rect x="321" y="46" width="1" height="1" fill="#000"/><rect x="321" y="45" width="1" height="1" fill="#000"/><rect x="322" y="47" width="1" height="1" fill="#000"/><rect x="322" y="46" width="1" height="1" fill="#000"/><rect x="323" y="48" width="1" height="1" fill="#000"/><rect x="323" y="47" width="1" height="1" fill="#000"/><rect x="324" y="49" width="1" height="1" fill="#000"/><rect x="324" y="48" width="1" height="1" fill="#000"/><rect x="320" y="47" width="1" height="1" fill="#000"/><rect x="320" y="46" width="1" height="1" fill="#000"/><rect x="321" y="48" width="1" height="1" fill="#000"/><rect x="321" y="47" width="1" height="1" fill="#000"/><rect x="322" y="49" width="1" height="1" fill="#000"/><rect x="322" y="48" width="1" height="1" fill="#000"/><rect x="323" y="50" width="1" height="1" fill="#000"/><rect x="323" y="49" width="1" height="1" fill="#000"/><rect x="319" y="48" width="1" height="1" fill="#000"/><rect x="319" y="47" width="1" height="1" fill="#000"/><rect x="320" y="49" width="1" height="1" fill="#000"/><rect x="320" y="48" width="1" height="1" fill="#000"/><rect x="321" y="50" width="1" height="1" fill="#000"/><rect x="321" y="49" width="1" height="1" fill="#000"/><rect x="322" y="51" width="1" height="1" fill="#000"/><rect x="322" y="50" width="1" height="1" fill="#000"/><rect x="318" y="49" width="1" height="1" fill="#000"/><rect x="318" y="48" width="1" height="1" fill="#000"/><rect x="319" y="50" width="1" height="1" fill="#000"/><rect x="319" y="49" width="1" height="1" fill="#000"/><rect x="320" y="51" width="1" height="1" fill="#000"/><rect x="320" y="50" width="1" height="1" fill="#000"/><rect x="321" y="52" width="1" height="1" fill="#000"/><rect x="321" y="51" width="1" height="1" fill="#000"/><rect x="317" y="50" width="1" height="1" fill="#000"/><rect x="317" y="49" width="1" height="1" fill="#000"/><rect x="318" y="51" width="1" height="1" fill="#000"/><rect x="318" y="50" width="1" height="1" fill="#000"/><rect x="319" y="52" width="1" height="1" fill="#000"/><rect x="319" y="51" width="1" height="1" fill="#000"/><rect x="320" y="53" width="1" height="1" fill="#000"/><rect x="320" y="52" width="1" height="1" fill="#000"/><rect x="316" y="51" width="1" height="1" fill="#000"/><rect x="316" y="50" width="1" height="1" fill="#000"/><rect x="317" y="52" width="1" height="1" fill="#000"/><rect x="317" y="51" width="1" height="1" fill="#000"/><rect x="318" y="53" width="1" height="1" fill="#000"/><rect x="318" y="52" width="1" height="1" fill="#000"/><rect x="319" y="54" width="1" height="1" fill="#000"/><rect x="319" y="53" width="1" height="1" fill="#000"/><rect x="315" y="52" width="1" height="1" fill="#000"/><rect x="315" y="51" width="1" height="1" fill="#000"/><rect x="316" y="53" width="1" height="1" fill="#000"/><rect x="316" y="52" width="1" height="1" fill="#000"/><rect x="317" y="54" width="1" height="1" fill="#000"/><rect x="317" y="53" width="1" height="1" fill="#000"/><rect x="318" y="55" width="1" height="1" fill="#000"/><rect x="318" y="54" width="1" height="1" fill="#000"/><rect x="314" y="53" width="1" height="1" fill="#000"/><rect x="314" y="52" width="1" height="1" fill="#000"/><rect x="315" y="54" width="1" height="1" fill="#000"/><rect x="315" y="53" width="1" height="1" fill="#000"/><rect x="316" y="55" width="1" height="1" fill="#000"/><rect x="316" y="54" width="1" height="1" fill="#000"/><rect x="317" y="56" width="1" height="1" fill="#000"/><rect x="317" y="55" width="1" height="1" fill="#000"/><rect x="313" y="54" width="1" height="1" fill="#000"/><rect x="313" y="53" width="1" height="1" fill="#000"/><rect x="314" y="55" width="1" height="1" fill="#000"/><rect x="314" y="54" width="1" height="1" fill="#000"/><rect x="315" y="56" width="1" height="1" fill="#000"/><rect x="315" y="55" width="1" height="1" fill="#000"/><rect x="316" y="57" width="1" height="1" fill="#000"/><rect x="316" y="56" width="1" height="1" fill="#000"/><rect x="327" y="41" width="1" height="1" fill="#ff0000"/><rect x="327" y="40" width="1" height="1" fill="#ff0000"/><rect x="328" y="42" width="1" height="1" fill="#ff0000"/><rect x="328" y="41" width="1" height="1" fill="#ff0000"/><rect x="329" y="43" width="1" height="1" fill="#ff0000"/><rect x="329" y="42" width="1" height="1" fill="#ff0000"/><rect x="326" y="42" width="1" height="1" fill="#ff00ff"/><rect x="326" y="41" width="1" height="1" fill="#ff00ff"/><rect x="327" y="43" width="1" height="1" fill="#ff00ff"/><rect x="327" y="42" width="1" height="1" fill="#ff00ff"/><rect x="328" y="44" width="1" height="1" fill="#ff00ff"/><rect x="328" y="43" width="1" height="1" fill="#ff00ff"/><rect x="325" y="43" width="1" height="1" fill="#ff0000"/><rect x="325" y="42" width="1" height="1" fill="#ff0000"/><rect x="326" y="44" width="1" height="1" fill="#ff0000"/><rect x="326" y="43" width="1" height="1" fill="#ff0000"/><rect x="327" y="45" width="1" height="1" fill="#ff0000"/><rect x="327" y="44" width="1" height="1" fill="#ff0000"/><rect x="324" y="44" width="1" height="1" fill="#00ff00"/><rect x="324" y="43" width="1" height="1" fill="#00ff00"/><rect x="325" y="45" width="1" height="1" fill="#00ff00"/><rect x="325" y="44" width="1" height="1" fill="#00ff00"/><rect x="326" y="46" width="1" height="1" fill="#00ff00"/><rect x="326" y="45" width="1" height="1" fill="#00ff00"/><rect x="323" y="45" width="1" height="1" fill="#00ff00"/><rect x="323" y="44" width="1" height="1" fill="#00ff00"/><rect x="324" y="46" width="1" height="1" fill="#00ff00"/><rect x="324" y="45" width="1" height="1" fill="#00ff00"/><rect x="325" y="47" width="1" height="1" fill="#00ff00"/><rect x="325" y="46" width="1" height="1" fill="#00ff00"/><rect x="322" y="46" width="1" height="1" fill="#ffff00"/><rect x="322" y="45" width="1" height="1" fill="#ffff00"/><rect x="323" y="47" width="1" height="1" fill="#ffff00"/><rect x="323" y="46" width="1" height="1" fill="#ffff00"/><rect x="324" y="48" width="1" height="1" fill="#ffff00"/><rect x="324" y="47" width="1" height="1" fill="#ffff00"/><rect x="321" y="47" width="1" height="1" fill="#ffff00"/><rect x="321" y="46" width="1" height="1" fill="#ffff00"/><rect x="322" y="48" width="1" height="1" fill="#ffff00"/><rect x="322" y="47" width="1" height="1" fill="#ffff00"/><rect x="323" y="49" width="1" height="1" fill="#ffff00"/><rect x="323" y="48" width="1" height="1" fill="#ffff00"/><rect x="320" y="48" width="1" height="1" fill="#ffff00"/><rect x="320" y="47" width="1" height="1" fill="#ffff00"/><rect x="321" y="49" width="1" height="1" fill="#ffff00"/><rect x="321" y="48" width="1" height="1" fill="#ffff00"/><rect x="322" y="50" width="1" height="1" fill="#ffff00"/><rect x="322" y="49" width="1" height="1" fill="#ffff00"/><rect x="319" y="49" width="1" height="1" fill="#ffff00"/><rect x="319" y="48" width="1" height="1" fill="#ffff00"/><rect x="320" y="50" width="1" height="1" fill="#ffff00"/><rect x="320" y="49" width="1" height="1" fill="#ffff00"/><rect x="321" y="51" width="1" height="1" fill="#ffff00"/><rect x="321" y="50" width="1" height="1" fill="#ffff00"/><rect x="318" y="50" width="1" height="1" fill="#ffff00"/><rect x="318" y="49" width="1" height="1" fill="#ffff00"/><rect x="319" y="51" width="1" height="1" fill="#ffff00"/><rect x="319" y="50" width="1" height="1" fill="#ffff00"/><rect x="320" y="52" width="1" height="1" fill="#ffff00"/><rect x="320" y="51" width="1" height="1" fill="#ffff00"/><rect x="317" y="51" width="1" height="1" fill="#ffff00"/><rect x="317" y="50" width="1" height="1" fill="#ffff00"/><rect x="318" y="52" width="1" height="1" fill="#ffff00"/><rect x="318" y="51" width="1" height="1" fill="#ffff00"/><rect x="319" y="53" width="1" height="1" fill="#ffff00"/><rect x="319" y="52" width="1" height="1" fill="#ffff00"/><rect x="316" y="52" width="1" height="1" fill="#ffff00"/><rect x="316" y="51" width="1" height="1" fill="#ffff00"/><rect x="317" y="53" width="1" height="1" fill="#ffff00"/><rect x="317" y="52" width="1" height="1" fill="#ffff00"/><rect x="318" y="54" width="1" height="1" fill="#ffff00"/><rect x="318" y="53" width="1" height="1" fill="#ffff00"/><rect x="315" y="53" width="1" height="1" fill="#fdfdfd"/><rect x="315" y="52" width="1" height="1" fill="#fdfdfd"/><rect x="316" y="54" width="1" height="1" fill="#fdfdfd"/><rect x="316" y="53" width="1" height="1" fill="#fdfdfd"/><rect x="317" y="55" width="1" height="1" fill="#fdfdfd"/><rect x="317" y="54" width="1" height="1" fill="#fdfdfd"/><rect x="314" y="54" width="1" height="1" fill="#fdfdfd"/><rect x="314" y="53" width="1" height="1" fill="#fdfdfd"/><rect x="315" y="55" width="1" height="1" fill="#fdfdfd"/><rect x="315" y="54" width="1" height="1" fill="#fdfdfd"/><rect x="316" y="56" width="1" height="1" fill="#fdfdfd"/><rect x="316" y="55" width="1" height="1" fill="#fdfdfd"/><rect x="327" y="41" width="1" height="1" fill="#ffff00"/><rect x="329" y="44" width="1" height="1" fill="#ff00ff"/><rect x="321" y="47" width="1" height="1" fill="#fdfdfd"/><rect x="320" y="48" width="1" height="1" fill="#fdfdfd"/><rect x="319" y="49" width="1" height="1" fill="#fdfdfd"/><rect x="318" y="50" width="1" height="1" fill="#fdfdfd"/><rect x="317" y="51" width="1" height="1" fill="#fdfdfd"/><rect x="313" y="55" width="2" height="1" fill="#000"/><rect x="312" y="56" width="3" height="1" fill="#000"/></svg>
<div class="tb" style="left:339px"></div><div class="t b" style="left:343px;top:36px;width:14px;height:26px;line-height:26px;font-family:'Liberation Serif',serif;font-size:24px;color:#000086;text-align:center">?</div>
<div class="a" style="left:0px;top:66px;width:10px;height:1px;background:#dedede"></div>
<div class="a" style="left:125px;top:66px;width:20px;height:1px;background:#fdfdfd"></div>
<div class="a" style="left:260px;top:66px;width:21px;height:1px;background:#fdfdfd"></div>
<div class="a" style="left:10px;top:68px;width:747px;height:1px;background:#fdfdfd"></div>
<div class="a" style="left:9px;top:68px;width:1px;height:491px;background:#868686"></div>
<div class="a" style="left:10px;top:68px;width:1px;height:491px;background:#fdfdfd"></div>
<div class="a" style="left:757px;top:68px;width:1px;height:491px;background:#868686"></div>
<div class="a" style="left:758px;top:68px;width:1px;height:492px;background:#fdfdfd"></div>
<div class="a" style="left:9px;top:179px;width:749px;height:1px;background:#868686"></div>
<div class="a" style="left:10px;top:180px;width:747px;height:1px;background:#fdfdfd"></div>
<div class="a" style="left:9px;top:558px;width:749px;height:1px;background:#868686"></div>
<div class="a" style="left:9px;top:559px;width:750px;height:1px;background:#fdfdfd"></div>
<div class="t b" id="hv" style="left:37px;top:68px;font-size:14px;letter-spacing:0.308px;color:#000;">Course Version</div>
<div class="t b" id="hc" style="left:37px;top:180px;font-size:14px;letter-spacing:0.250px;color:#000;">Course Categorisation</div>
<div class="t" id="l1" style="left:23px;top:108px;font-size:14px;letter-spacing:-0.182px;color:#000;">Course Code:</div>
<div class="t" id="l2" style="left:217px;top:108px;font-size:14px;letter-spacing:-0.214px;color:#000;">Version Number:</div>
<div class="t" id="l3" style="left:404px;top:108px;font-size:14px;letter-spacing:-0.385px;color:#000;">Course Status:</div>
<div class="t" id="l4" style="left:78px;top:132px;font-size:14px;letter-spacing:-0.200px;color:#000;">Title:</div>
<div class="fld" style="left:114px;top:107px;width:69px;height:26px;"><i></i></div>
<div class="fld" style="left:325px;top:107px;width:40px;height:26px;"><i></i></div>
<div class="fld" style="left:498px;top:107px;width:105px;height:26px;"><i></i></div>
<div class="fld" style="left:114px;top:131px;width:624px;height:26px;"><i></i></div>
<div class="t" id="f1" style="left:118px;top:112px;font-size:14px;letter-spacing:-1.000px;color:#000;">001</div>
<div class="t" id="f2" style="left:351px;top:112px;font-size:14px;letter-spacing:0.000px;color:#000;">2</div>
<div class="t" id="f3" style="left:503px;top:112px;font-size:14px;letter-spacing:-0.400px;color:#000;">ACTIVE</div>
<div class="t" id="f4" style="left:119px;top:136px;font-size:14px;letter-spacing:-0.375px;color:#000;">AUSTRALIAN SOCIETY OF ACCOUNTANTS</div>
<div class="t" id="g1" style="left:47px;top:220px;font-size:14px;letter-spacing:-0.214px;color:#000;">Course Category</div>
<div class="t" id="g2" style="left:220px;top:220px;font-size:14px;letter-spacing:0.000px;color:#000;">Description</div>
<div class="a" style="left:19px;top:237px;width:19px;height:299px;background:#fdfdfd;border:1px solid #000"></div>
<div class="a" style="left:20px;top:238px;width:17px;height:15px;background:#c5c5c5;border-left:1px solid #fdfdfd;border-top:1px solid #fdfdfd;border-right:2px solid #868686;border-bottom:2px solid #868686"></div><svg class="a" style="left:20px;top:238px" width="17" height="15" viewBox="0 0 17 15"><rect x="5" y="8" width="2" height="1" fill="#fdfdfd"/><rect x="10" y="8" width="4" height="1" fill="#fdfdfd"/><rect x="10" y="9" width="1" height="2" fill="#fdfdfd"/><rect x="8" y="11" width="3" height="1" fill="#fdfdfd"/><rect x="8" y="4" width="1" height="1" fill="#868686"/><rect x="7" y="5" width="3" height="1" fill="#868686"/><rect x="6" y="6" width="5" height="1" fill="#868686"/><rect x="5" y="7" width="7" height="1" fill="#868686"/><rect x="7" y="8" width="3" height="3" fill="#868686"/></svg>
<div class="a" style="left:20px;top:253px;width:17px;height:1px;background:#000"></div>
<div class="a" style="left:20px;top:519px;width:17px;height:1px;background:#000"></div>
<div class="a" style="left:20px;top:520px;width:17px;height:15px;background:#c5c5c5;border-left:1px solid #fdfdfd;border-top:1px solid #fdfdfd;border-right:2px solid #868686;border-bottom:2px solid #868686"></div><svg class="a" style="left:20px;top:520px" width="17" height="15" viewBox="0 0 17 15"><rect x="10" y="5" width="1" height="2" fill="#fdfdfd"/><rect x="12" y="8" width="2" height="1" fill="#fdfdfd"/><rect x="11" y="9" width="1" height="1" fill="#fdfdfd"/><rect x="10" y="10" width="1" height="1" fill="#fdfdfd"/><rect x="9" y="11" width="1" height="1" fill="#fdfdfd"/><rect x="7" y="4" width="3" height="3" fill="#868686"/><rect x="5" y="7" width="7" height="1" fill="#868686"/><rect x="6" y="8" width="5" height="1" fill="#868686"/><rect x="7" y="9" width="3" height="1" fill="#868686"/><rect x="8" y="10" width="1" height="1" fill="#868686"/></svg>
<div class="fld" style="left:47px;top:236px;width:121px;height:26px"><i></i><div class="a" style="left:4px;top:4px;width:10px;height:16px;background:#008686"></div><div class="a" style="left:14px;top:4px;width:2px;height:17px;background:#000"></div></div>
<div class="t" id="g3" style="left:52px;top:241px;font-size:14px;letter-spacing:0.000px;color:#fdfdfd;">N</div>
<div class="fld" style="left:220px;top:235px;width:444px;height:26px;background:#b2b48c"><i></i></div>
<div class="t" id="g4" style="left:225px;top:240px;font-size:14px;letter-spacing:-0.375px;color:#868686;">COURSE CATEGORY N</div>
<div class="lov" style="top:236px"></div><svg class="a" style="left:176px;top:236px" width="25" height="25" viewBox="0 0 25 25"><rect x="9" y="5" width="4" height="6" fill="#000086"/><rect x="7" y="11" width="8" height="1" fill="#000086"/><rect x="8" y="12" width="6" height="1" fill="#000086"/><rect x="9" y="13" width="4" height="1" fill="#000086"/><rect x="10" y="14" width="2" height="1" fill="#000086"/><rect x="7" y="16" width="9" height="1" fill="#000086"/></svg>
<div class="fld" style="left:47px;top:261px;width:121px;height:26px;"><i></i></div>
<div class="fld" style="left:220px;top:260px;width:444px;height:26px;"><i></i></div>
<div class="lov" style="top:261px"></div><svg class="a" style="left:176px;top:261px" width="25" height="25" viewBox="0 0 25 25"><rect x="9" y="5" width="1" height="1" fill="#000086"/><rect x="11" y="5" width="1" height="1" fill="#000086"/><rect x="10" y="6" width="1" height="1" fill="#000086"/><rect x="12" y="6" width="1" height="1" fill="#000086"/><rect x="9" y="7" width="1" height="1" fill="#000086"/><rect x="11" y="7" width="1" height="1" fill="#000086"/><rect x="10" y="8" width="1" height="1" fill="#000086"/><rect x="12" y="8" width="1" height="1" fill="#000086"/><rect x="9" y="9" width="1" height="1" fill="#000086"/><rect x="11" y="9" width="1" height="1" fill="#000086"/><rect x="10" y="10" width="1" height="1" fill="#000086"/><rect x="12" y="10" width="1" height="1" fill="#000086"/><rect x="7" y="11" width="1" height="1" fill="#000086"/><rect x="9" y="11" width="1" height="1" fill="#000086"/><rect x="11" y="11" width="1" height="1" fill="#000086"/><rect x="13" y="11" width="1" height="1" fill="#000086"/><rect x="8" y="12" width="1" height="1" fill="#000086"/><rect x="10" y="12" width="1" height="1" fill="#000086"/><rect x="12" y="12" width="1" height="1" fill="#000086"/><rect x="9" y="13" width="1" height="1" fill="#000086"/><rect x="11" y="13" width="1" height="1" fill="#000086"/><rect x="10" y="14" width="1" height="1" fill="#000086"/><rect x="7" y="16" width="1" height="1" fill="#000086"/><rect x="9" y="16" width="1" height="1" fill="#000086"/><rect x="11" y="16" width="1" height="1" fill="#000086"/><rect x="13" y="16" width="1" height="1" fill="#000086"/><rect x="15" y="16" width="1" height="1" fill="#000086"/></svg>
<div class="fld" style="left:47px;top:286px;width:121px;height:26px;"><i></i></div>
<div class="fld" style="left:220px;top:285px;width:444px;height:26px;"><i></i></div>
<div class="lov" style="top:286px"></div><svg class="a" style="left:176px;top:286px" width="25" height="25" viewBox="0 0 25 25"><rect x="9" y="5" width="1" height="1" fill="#000086"/><rect x="11" y="5" width="1" height="1" fill="#000086"/><rect x="10" y="6" width="1" height="1" fill="#000086"/><rect x="12" y="6" width="1" height="1" fill="#000086"/><rect x="9" y="7" width="1" height="1" fill="#000086"/><rect x="11" y="7" width="1" height="1" fill="#000086"/><rect x="10" y="8" width="1" height="1" fill="#000086"/><rect x="12" y="8" width="1" height="1" fill="#000086"/><rect x="9" y="9" width="1" height="1" fill="#000086"/><rect x="11" y="9" width="1" height="1" fill="#000086"/><rect x="10" y="10" width="1" height="1" fill="#000086"/><rect x="12" y="10" width="1" height="1" fill="#000086"/><rect x="7" y="11" width="1" height="1" fill="#000086"/><rect x="9" y="11" width="1" height="1" fill="#000086"/><rect x="11" y="11" width="1" height="1" fill="#000086"/><rect x="13" y="11" width="1" height="1" fill="#000086"/><rect x="8" y="12" width="1" height="1" fill="#000086"/><rect x="10" y="12" width="1" height="1" fill="#000086"/><rect x="12" y="12" width="1" height="1" fill="#000086"/><rect x="9" y="13" width="1" height="1" fill="#000086"/><rect x="11" y="13" width="1" height="1" fill="#000086"/><rect x="10" y="14" width="1" height="1" fill="#000086"/><rect x="7" y="16" width="1" height="1" fill="#000086"/><rect x="9" y="16" width="1" height="1" fill="#000086"/><rect x="11" y="16" width="1" height="1" fill="#000086"/><rect x="13" y="16" width="1" height="1" fill="#000086"/><rect x="15" y="16" width="1" height="1" fill="#000086"/></svg>
<div class="fld" style="left:47px;top:311px;width:121px;height:26px;"><i></i></div>
<div class="fld" style="left:220px;top:310px;width:444px;height:26px;"><i></i></div>
<div class="lov" style="top:311px"></div><svg class="a" style="left:176px;top:311px" width="25" height="25" viewBox="0 0 25 25"><rect x="9" y="5" width="1" height="1" fill="#000086"/><rect x="11" y="5" width="1" height="1" fill="#000086"/><rect x="10" y="6" width="1" height="1" fill="#000086"/><rect x="12" y="6" width="1" height="1" fill="#000086"/><rect x="9" y="7" width="1" height="1" fill="#000086"/><rect x="11" y="7" width="1" height="1" fill="#000086"/><rect x="10" y="8" width="1" height="1" fill="#000086"/><rect x="12" y="8" width="1" height="1" fill="#000086"/><rect x="9" y="9" width="1" height="1" fill="#000086"/><rect x="11" y="9" width="1" height="1" fill="#000086"/><rect x="10" y="10" width="1" height="1" fill="#000086"/><rect x="12" y="10" width="1" height="1" fill="#000086"/><rect x="7" y="11" width="1" height="1" fill="#000086"/><rect x="9" y="11" width="1" height="1" fill="#000086"/><rect x="11" y="11" width="1" height="1" fill="#000086"/><rect x="13" y="11" width="1" height="1" fill="#000086"/><rect x="8" y="12" width="1" height="1" fill="#000086"/><rect x="10" y="12" width="1" height="1" fill="#000086"/><rect x="12" y="12" width="1" height="1" fill="#000086"/><rect x="9" y="13" width="1" height="1" fill="#000086"/><rect x="11" y="13" width="1" height="1" fill="#000086"/><rect x="10" y="14" width="1" height="1" fill="#000086"/><rect x="7" y="16" width="1" height="1" fill="#000086"/><rect x="9" y="16" width="1" height="1" fill="#000086"/><rect x="11" y="16" width="1" height="1" fill="#000086"/><rect x="13" y="16" width="1" height="1" fill="#000086"/><rect x="15" y="16" width="1" height="1" fill="#000086"/></svg>
<div class="fld" style="left:47px;top:336px;width:121px;height:26px;"><i></i></div>
<div class="fld" style="left:220px;top:335px;width:444px;height:26px;"><i></i></div>
<div class="lov" style="top:336px"></div><svg class="a" style="left:176px;top:336px" width="25" height="25" viewBox="0 0 25 25"><rect x="9" y="5" width="1" height="1" fill="#000086"/><rect x="11" y="5" width="1" height="1" fill="#000086"/><rect x="10" y="6" width="1" height="1" fill="#000086"/><rect x="12" y="6" width="1" height="1" fill="#000086"/><rect x="9" y="7" width="1" height="1" fill="#000086"/><rect x="11" y="7" width="1" height="1" fill="#000086"/><rect x="10" y="8" width="1" height="1" fill="#000086"/><rect x="12" y="8" width="1" height="1" fill="#000086"/><rect x="9" y="9" width="1" height="1" fill="#000086"/><rect x="11" y="9" width="1" height="1" fill="#000086"/><rect x="10" y="10" width="1" height="1" fill="#000086"/><rect x="12" y="10" width="1" height="1" fill="#000086"/><rect x="7" y="11" width="1" height="1" fill="#000086"/><rect x="9" y="11" width="1" height="1" fill="#000086"/><rect x="11" y="11" width="1" height="1" fill="#000086"/><rect x="13" y="11" width="1" height="1" fill="#000086"/><rect x="8" y="12" width="1" height="1" fill="#000086"/><rect x="10" y="12" width="1" height="1" fill="#000086"/><rect x="12" y="12" width="1" height="1" fill="#000086"/><rect x="9" y="13" width="1" height="1" fill="#000086"/><rect x="11" y="13" width="1" height="1" fill="#000086"/><rect x="10" y="14" width="1" height="1" fill="#000086"/><rect x="7" y="16" width="1" height="1" fill="#000086"/><rect x="9" y="16" width="1" height="1" fill="#000086"/><rect x="11" y="16" width="1" height="1" fill="#000086"/><rect x="13" y="16" width="1" height="1" fill="#000086"/><rect x="15" y="16" width="1" height="1" fill="#000086"/></svg>
<div class="fld" style="left:47px;top:361px;width:121px;height:26px;"><i></i></div>
<div class="fld" style="left:220px;top:360px;width:444px;height:26px;"><i></i></div>
<div class="lov" style="top:361px"></div><svg class="a" style="left:176px;top:361px" width="25" height="25" viewBox="0 0 25 25"><rect x="9" y="5" width="1" height="1" fill="#000086"/><rect x="11" y="5" width="1" height="1" fill="#000086"/><rect x="10" y="6" width="1" height="1" fill="#000086"/><rect x="12" y="6" width="1" height="1" fill="#000086"/><rect x="9" y="7" width="1" height="1" fill="#000086"/><rect x="11" y="7" width="1" height="1" fill="#000086"/><rect x="10" y="8" width="1" height="1" fill="#000086"/><rect x="12" y="8" width="1" height="1" fill="#000086"/><rect x="9" y="9" width="1" height="1" fill="#000086"/><rect x="11" y="9" width="1" height="1" fill="#000086"/><rect x="10" y="10" width="1" height="1" fill="#000086"/><rect x="12" y="10" width="1" height="1" fill="#000086"/><rect x="7" y="11" width="1" height="1" fill="#000086"/><rect x="9" y="11" width="1" height="1" fill="#000086"/><rect x="11" y="11" width="1" height="1" fill="#000086"/><rect x="13" y="11" width="1" height="1" fill="#000086"/><rect x="8" y="12" width="1" height="1" fill="#000086"/><rect x="10" y="12" width="1" height="1" fill="#000086"/><rect x="12" y="12" width="1" height="1" fill="#000086"/><rect x="9" y="13" width="1" height="1" fill="#000086"/><rect x="11" y="13" width="1" height="1" fill="#000086"/><rect x="10" y="14" width="1" height="1" fill="#000086"/><rect x="7" y="16" width="1" height="1" fill="#000086"/><rect x="9" y="16" width="1" height="1" fill="#000086"/><rect x="11" y="16" width="1" height="1" fill="#000086"/><rect x="13" y="16" width="1" height="1" fill="#000086"/><rect x="15" y="16" width="1" height="1" fill="#000086"/></svg>
<div class="fld" style="left:47px;top:386px;width:121px;height:26px;"><i></i></div>
<div class="fld" style="left:220px;top:385px;width:444px;height:26px;"><i></i></div>
<div class="lov" style="top:386px"></div><svg class="a" style="left:176px;top:386px" width="25" height="25" viewBox="0 0 25 25"><rect x="9" y="5" width="1" height="1" fill="#000086"/><rect x="11" y="5" width="1" height="1" fill="#000086"/><rect x="10" y="6" width="1" height="1" fill="#000086"/><rect x="12" y="6" width="1" height="1" fill="#000086"/><rect x="9" y="7" width="1" height="1" fill="#000086"/><rect x="11" y="7" width="1" height="1" fill="#000086"/><rect x="10" y="8" width="1" height="1" fill="#000086"/><rect x="12" y="8" width="1" height="1" fill="#000086"/><rect x="9" y="9" width="1" height="1" fill="#000086"/><rect x="11" y="9" width="1" height="1" fill="#000086"/><rect x="10" y="10" width="1" height="1" fill="#000086"/><rect x="12" y="10" width="1" height="1" fill="#000086"/><rect x="7" y="11" width="1" height="1" fill="#000086"/><rect x="9" y="11" width="1" height="1" fill="#000086"/><rect x="11" y="11" width="1" height="1" fill="#000086"/><rect x="13" y="11" width="1" height="1" fill="#000086"/><rect x="8" y="12" width="1" height="1" fill="#000086"/><rect x="10" y="12" width="1" height="1" fill="#000086"/><rect x="12" y="12" width="1" height="1" fill="#000086"/><rect x="9" y="13" width="1" height="1" fill="#000086"/><rect x="11" y="13" width="1" height="1" fill="#000086"/><rect x="10" y="14" width="1" height="1" fill="#000086"/><rect x="7" y="16" width="1" height="1" fill="#000086"/><rect x="9" y="16" width="1" height="1" fill="#000086"/><rect x="11" y="16" width="1" height="1" fill="#000086"/><rect x="13" y="16" width="1" height="1" fill="#000086"/><rect x="15" y="16" width="1" height="1" fill="#000086"/></svg>
<div class="fld" style="left:47px;top:411px;width:121px;height:26px;"><i></i></div>
<div class="fld" style="left:220px;top:410px;width:444px;height:26px;"><i></i></div>
<div class="lov" style="top:411px"></div><svg class="a" style="left:176px;top:411px" width="25" height="25" viewBox="0 0 25 25"><rect x="9" y="5" width="1" height="1" fill="#000086"/><rect x="11" y="5" width="1" height="1" fill="#000086"/><rect x="10" y="6" width="1" height="1" fill="#000086"/><rect x="12" y="6" width="1" height="1" fill="#000086"/><rect x="9" y="7" width="1" height="1" fill="#000086"/><rect x="11" y="7" width="1" height="1" fill="#000086"/><rect x="10" y="8" width="1" height="1" fill="#000086"/><rect x="12" y="8" width="1" height="1" fill="#000086"/><rect x="9" y="9" width="1" height="1" fill="#000086"/><rect x="11" y="9" width="1" height="1" fill="#000086"/><rect x="10" y="10" width="1" height="1" fill="#000086"/><rect x="12" y="10" width="1" height="1" fill="#000086"/><rect x="7" y="11" width="1" height="1" fill="#000086"/><rect x="9" y="11" width="1" height="1" fill="#000086"/><rect x="11" y="11" width="1" height="1" fill="#000086"/><rect x="13" y="11" width="1" height="1" fill="#000086"/><rect x="8" y="12" width="1" height="1" fill="#000086"/><rect x="10" y="12" width="1" height="1" fill="#000086"/><rect x="12" y="12" width="1" height="1" fill="#000086"/><rect x="9" y="13" width="1" height="1" fill="#000086"/><rect x="11" y="13" width="1" height="1" fill="#000086"/><rect x="10" y="14" width="1" height="1" fill="#000086"/><rect x="7" y="16" width="1" height="1" fill="#000086"/><rect x="9" y="16" width="1" height="1" fill="#000086"/><rect x="11" y="16" width="1" height="1" fill="#000086"/><rect x="13" y="16" width="1" height="1" fill="#000086"/><rect x="15" y="16" width="1" height="1" fill="#000086"/></svg>
<div class="fld" style="left:47px;top:436px;width:121px;height:26px;"><i></i></div>
<div class="fld" style="left:220px;top:435px;width:444px;height:26px;"><i></i></div>
<div class="lov" style="top:436px"></div><svg class="a" style="left:176px;top:436px" width="25" height="25" viewBox="0 0 25 25"><rect x="9" y="5" width="1" height="1" fill="#000086"/><rect x="11" y="5" width="1" height="1" fill="#000086"/><rect x="10" y="6" width="1" height="1" fill="#000086"/><rect x="12" y="6" width="1" height="1" fill="#000086"/><rect x="9" y="7" width="1" height="1" fill="#000086"/><rect x="11" y="7" width="1" height="1" fill="#000086"/><rect x="10" y="8" width="1" height="1" fill="#000086"/><rect x="12" y="8" width="1" height="1" fill="#000086"/><rect x="9" y="9" width="1" height="1" fill="#000086"/><rect x="11" y="9" width="1" height="1" fill="#000086"/><rect x="10" y="10" width="1" height="1" fill="#000086"/><rect x="12" y="10" width="1" height="1" fill="#000086"/><rect x="7" y="11" width="1" height="1" fill="#000086"/><rect x="9" y="11" width="1" height="1" fill="#000086"/><rect x="11" y="11" width="1" height="1" fill="#000086"/><rect x="13" y="11" width="1" height="1" fill="#000086"/><rect x="8" y="12" width="1" height="1" fill="#000086"/><rect x="10" y="12" width="1" height="1" fill="#000086"/><rect x="12" y="12" width="1" height="1" fill="#000086"/><rect x="9" y="13" width="1" height="1" fill="#000086"/><rect x="11" y="13" width="1" height="1" fill="#000086"/><rect x="10" y="14" width="1" height="1" fill="#000086"/><rect x="7" y="16" width="1" height="1" fill="#000086"/><rect x="9" y="16" width="1" height="1" fill="#000086"/><rect x="11" y="16" width="1" height="1" fill="#000086"/><rect x="13" y="16" width="1" height="1" fill="#000086"/><rect x="15" y="16" width="1" height="1" fill="#000086"/></svg>
<div class="fld" style="left:47px;top:461px;width:121px;height:26px;"><i></i></div>
<div class="fld" style="left:220px;top:460px;width:444px;height:26px;"><i></i></div>
<div class="lov" style="top:461px"></div><svg class="a" style="left:176px;top:461px" width="25" height="25" viewBox="0 0 25 25"><rect x="9" y="5" width="1" height="1" fill="#000086"/><rect x="11" y="5" width="1" height="1" fill="#000086"/><rect x="10" y="6" width="1" height="1" fill="#000086"/><rect x="12" y="6" width="1" height="1" fill="#000086"/><rect x="9" y="7" width="1" height="1" fill="#000086"/><rect x="11" y="7" width="1" height="1" fill="#000086"/><rect x="10" y="8" width="1" height="1" fill="#000086"/><rect x="12" y="8" width="1" height="1" fill="#000086"/><rect x="9" y="9" width="1" height="1" fill="#000086"/><rect x="11" y="9" width="1" height="1" fill="#000086"/><rect x="10" y="10" width="1" height="1" fill="#000086"/><rect x="12" y="10" width="1" height="1" fill="#000086"/><rect x="7" y="11" width="1" height="1" fill="#000086"/><rect x="9" y="11" width="1" height="1" fill="#000086"/><rect x="11" y="11" width="1" height="1" fill="#000086"/><rect x="13" y="11" width="1" height="1" fill="#000086"/><rect x="8" y="12" width="1" height="1" fill="#000086"/><rect x="10" y="12" width="1" height="1" fill="#000086"/><rect x="12" y="12" width="1" height="1" fill="#000086"/><rect x="9" y="13" width="1" height="1" fill="#000086"/><rect x="11" y="13" width="1" height="1" fill="#000086"/><rect x="10" y="14" width="1" height="1" fill="#000086"/><rect x="7" y="16" width="1" height="1" fill="#000086"/><rect x="9" y="16" width="1" height="1" fill="#000086"/><rect x="11" y="16" width="1" height="1" fill="#000086"/><rect x="13" y="16" width="1" height="1" fill="#000086"/><rect x="15" y="16" width="1" height="1" fill="#000086"/></svg>
<div class="fld" style="left:47px;top:486px;width:121px;height:26px;"><i></i></div>
<div class="fld" style="left:220px;top:485px;width:444px;height:26px;"><i></i></div>
<div class="lov" style="top:486px"></div><svg class="a" style="left:176px;top:486px" width="25" height="25" viewBox="0 0 25 25"><rect x="9" y="5" width="1" height="1" fill="#000086"/><rect x="11" y="5" width="1" height="1" fill="#000086"/><rect x="10" y="6" width="1" height="1" fill="#000086"/><rect x="12" y="6" width="1" height="1" fill="#000086"/><rect x="9" y="7" width="1" height="1" fill="#000086"/><rect x="11" y="7" width="1" height="1" fill="#000086"/><rect x="10" y="8" width="1" height="1" fill="#000086"/><rect x="12" y="8" width="1" height="1" fill="#000086"/><rect x="9" y="9" width="1" height="1" fill="#000086"/><rect x="11" y="9" width="1" height="1" fill="#000086"/><rect x="10" y="10" width="1" height="1" fill="#000086"/><rect x="12" y="10" width="1" height="1" fill="#000086"/><rect x="7" y="11" width="1" height="1" fill="#000086"/><rect x="9" y="11" width="1" height="1" fill="#000086"/><rect x="11" y="11" width="1" height="1" fill="#000086"/><rect x="13" y="11" width="1" height="1" fill="#000086"/><rect x="8" y="12" width="1" height="1" fill="#000086"/><rect x="10" y="12" width="1" height="1" fill="#000086"/><rect x="12" y="12" width="1" height="1" fill="#000086"/><rect x="9" y="13" width="1" height="1" fill="#000086"/><rect x="11" y="13" width="1" height="1" fill="#000086"/><rect x="10" y="14" width="1" height="1" fill="#000086"/><rect x="7" y="16" width="1" height="1" fill="#000086"/><rect x="9" y="16" width="1" height="1" fill="#000086"/><rect x="11" y="16" width="1" height="1" fill="#000086"/><rect x="13" y="16" width="1" height="1" fill="#000086"/><rect x="15" y="16" width="1" height="1" fill="#000086"/></svg>
<div class="fld" style="left:47px;top:511px;width:121px;height:26px;"><i></i></div>
<div class="fld" style="left:220px;top:510px;width:444px;height:26px;"><i></i></div>
<div class="lov" style="top:511px"></div><svg class="a" style="left:176px;top:511px" width="25" height="25" viewBox="0 0 25 25"><rect x="9" y="5" width="1" height="1" fill="#000086"/><rect x="11" y="5" width="1" height="1" fill="#000086"/><rect x="10" y="6" width="1" height="1" fill="#000086"/><rect x="12" y="6" width="1" height="1" fill="#000086"/><rect x="9" y="7" width="1" height="1" fill="#000086"/><rect x="11" y="7" width="1" height="1" fill="#000086"/><rect x="10" y="8" width="1" height="1" fill="#000086"/><rect x="12" y="8" width="1" height="1" fill="#000086"/><rect x="9" y="9" width="1" height="1" fill="#000086"/><rect x="11" y="9" width="1" height="1" fill="#000086"/><rect x="10" y="10" width="1" height="1" fill="#000086"/><rect x="12" y="10" width="1" height="1" fill="#000086"/><rect x="7" y="11" width="1" height="1" fill="#000086"/><rect x="9" y="11" width="1" height="1" fill="#000086"/><rect x="11" y="11" width="1" height="1" fill="#000086"/><rect x="13" y="11" width="1" height="1" fill="#000086"/><rect x="8" y="12" width="1" height="1" fill="#000086"/><rect x="10" y="12" width="1" height="1" fill="#000086"/><rect x="12" y="12" width="1" height="1" fill="#000086"/><rect x="9" y="13" width="1" height="1" fill="#000086"/><rect x="11" y="13" width="1" height="1" fill="#000086"/><rect x="10" y="14" width="1" height="1" fill="#000086"/><rect x="7" y="16" width="1" height="1" fill="#000086"/><rect x="9" y="16" width="1" height="1" fill="#000086"/><rect x="11" y="16" width="1" height="1" fill="#000086"/><rect x="13" y="16" width="1" height="1" fill="#000086"/><rect x="15" y="16" width="1" height="1" fill="#000086"/></svg>
<div class="a" style="left:0;top:570px;width:800px;height:30px;background:#c5c5c5;border-top:3px solid #fdfdfd;border-left:2px solid #fdfdfd;border-right:2px solid #868686;border-bottom:2px solid #868686"></div>
<div class="t" id="s1" style="left:2px;top:571px;font-size:12px;transform-origin:0 0;transform:scaleX(0.8797);color:#000;">Enter value for Course Category - list of values available</div>
<div class="t" id="s2" style="left:2px;top:583px;font-size:12px;transform-origin:0 0;transform:scaleX(0.8687);color:#000;">Count: *1</div>
</body></html>
